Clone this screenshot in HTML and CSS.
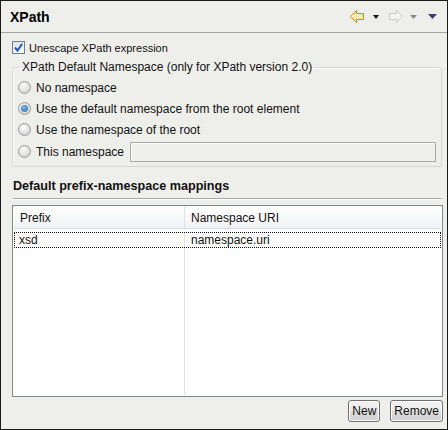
FILE: index.html
```html
<!DOCTYPE html>
<html>
<head>
<meta charset="utf-8">
<link rel="stylesheet" href="styles.css">
</head>
<body>
<div class="view">
  <div class="titlebar">
    <span class="title">XPath</span>
    <div class="tools">
      <svg class="arrow" width="14" height="13" viewBox="0 0 14 13"><path d="M0.5 6.5 L6.5 0.5 L6.5 3.5 L13.5 3.5 L13.5 9.5 L6.5 9.5 L6.5 12.5 Z" fill="#fde9a8" stroke="#d68a10" stroke-width="1"/></svg>
      <svg class="drop d1" width="6" height="4" viewBox="0 0 6 4"><path d="M0 0 H6 L3 4 Z" fill="#111"/></svg>
      <svg class="arrow a2" width="14" height="13" viewBox="0 0 14 13"><path d="M13.5 6.5 L7.5 0.5 L7.5 3.5 L0.5 3.5 L0.5 9.5 L7.5 9.5 L7.5 12.5 Z" fill="#f4f4f2" stroke="#c8c8c6" stroke-width="1"/></svg>
      <svg class="drop d2" width="7" height="4" viewBox="0 0 7 4"><path d="M0 0 H7 L3.5 4 Z" fill="#8a8a8a"/></svg>
      <svg class="drop d3" width="9" height="5" viewBox="0 0 9 5"><path d="M0 0 H9 L4.5 5 Z" fill="#3c3a78"/></svg>
    </div>
  </div>
  <div class="content">
    <label class="check-row">
      <span class="checkbox"><svg width="9" height="9" viewBox="0 0 9 9"><path d="M1 4.5 L3.5 7.5 L8 1" fill="none" stroke="#2250b8" stroke-width="2"/></svg></span>
      <span>Unescape XPath expression</span>
    </label>
    <fieldset class="group">
      <legend>XPath Default Namespace (only for XPath version 2.0)</legend>
      <div class="radio-row"><span class="radio"></span><span>No namespace</span></div>
      <div class="radio-row"><span class="radio on"></span><span>Use the default namespace from the root element</span></div>
      <div class="radio-row"><span class="radio"></span><span>Use the namespace of the root</span></div>
      <div class="radio-row field-row"><span class="radio"></span><span class="lbl">This namespace</span><span class="field"></span></div>
    </fieldset>
    <div class="section-title">Default prefix-namespace mappings</div>
    <div class="rule"></div>
    <div class="table">
      <div class="thead">
        <div class="c1">Prefix</div>
        <div class="c2">Namespace URI</div>
      </div>
      <div class="trow focus">
        <div class="c1">xsd</div>
        <div class="c2">namespace.uri</div>
      </div>
      <div class="tbody-rest">
        <div class="c1"></div>
        <div class="c2"></div>
      </div>
    </div>
    <div class="buttons">
      <button class="btn">New</button>
      <button class="btn">Remove</button>
    </div>
  </div>
</div>
</body>
</html>
```
FILE: styles.css
```css
* { box-sizing: border-box; }
html, body { margin: 0; padding: 0; }
body {
  font-family: "Liberation Sans", Arial, sans-serif;
  font-size: 12px;
  color: #111;
  background: #efefec;
}
.view {
  width: 448px;
  height: 430px;
  border: 1px solid #1a1a1a;
  background: #eeeeeb;
  display: flex;
  flex-direction: column;
  overflow: hidden;
}
.titlebar {
  height: 32px;
  flex: none;
  border-bottom: 1px solid #a4a4a2;
  display: flex;
  align-items: center;
  justify-content: space-between;
  padding: 0 10px 0 9px;
}
.title {
  font-weight: bold;
  font-size: 14px;
  color: #000;
}
.tools {
  display: flex;
  align-items: center;
}
.tools svg { display: block; }
.tools .d1 { margin-left: 9px; }
.tools .a2 { margin-left: 10px; }
.tools .d2 { margin-left: 7px; }
.tools .d3 { margin-left: 11px; }
.content {
  flex: 1;
  display: flex;
  flex-direction: column;
  padding: 7px 3px 0 10px;
}
.content > * { flex-shrink: 0; }
.check-row {
  display: flex;
  align-items: center;
  height: 15px;
  gap: 4px;
  padding-left: 1px;
  font-size: 11px;
}
.checkbox {
  width: 13px;
  height: 13px;
  border: 1px solid #6f7f96;
  background: linear-gradient(#dfe3ea, #f8f9fb);
  display: flex;
  align-items: center;
  justify-content: center;
}
.checkbox svg { display: block; }
.group {
  margin: 5px 2px 0 1px;
  padding: 3px 4px 3px 5px;
  border: 1px solid #d4d6d6;
  border-radius: 3px;
  box-shadow: inset 1px 1px 0 #fafafa;
}
.group legend {
  padding: 0 2px;
  margin-left: 2px;
  color: #111;
}
.radio-row {
  display: flex;
  align-items: center;
  height: 21px;
  gap: 5px;
}
.radio {
  width: 13px;
  height: 13px;
  border-radius: 50%;
  border: 1px solid #9a9c9c;
  background: radial-gradient(circle at 40% 35%, #ffffff, #d6d6d4 70%, #c4c4c2);
  position: relative;
  flex: none;
}
.radio.on::after {
  content: "";
  position: absolute;
  left: 3px;
  top: 3px;
  width: 5px;
  height: 5px;
  border-radius: 50%;
  background: radial-gradient(circle at 40% 35%, #7cc4f4, #1560b8);
  box-shadow: 0 0 0 1px #4b7fb8;
}
.field-row { height: 23px; }
.field-row .lbl { width: 89px; }
.field {
  flex: 1;
  height: 20px;
  border: 1px solid #a9a9a7;
  background: #efefec;
  box-shadow: inset 1px 1px 0 #fbfbfb;
  margin-right: 1px;
}
.section-title {
  margin-top: 11px;
  font-weight: bold;
  font-size: 12.6px;
  height: 16px;
  line-height: 16px;
  padding-left: 2px;
  color: #111;
}
.rule {
  margin-top: 4px;
  margin-left: 2px;
  margin-right: 2px;
  height: 2px;
  border-top: 1px solid #a8a8a6;
  border-bottom: 1px solid #fbfbfb;
}
.table {
  margin-top: 5px;
  margin-left: 1px;
  margin-right: 1px;
  height: 192px;
  border: 1px solid #828790;
  background: #fefefe;
  display: flex;
  flex-direction: column;
  padding: 0 1px 1px;
}
.thead, .trow, .tbody-rest {
  display: flex;
  flex-shrink: 0;
}
.thead {
  height: 23px;
  background: linear-gradient(#ffffff, #f7f8f9 60%, #f1f2f4);
  border-bottom: 1px solid #d8dce0;
  align-items: center;
}
.thead .c1, .thead .c2 { padding-top: 2px; }
.c1 { width: 171px; padding-left: 6px; border-right: 1px solid #e2e2e2; height: 100%; display: flex; align-items: center; }
.c2 { flex: 1; padding-left: 6px; height: 100%; display: flex; align-items: center; }
.trow {
  height: 16px;
  margin-top: 3px;
  outline: 1px dotted #111;
  outline-offset: -1px;
}
.trow .c1 { padding-left: 5px; }
.tbody-rest { flex: 1 1 auto; }
.buttons {
  display: flex;
  justify-content: flex-end;
  gap: 10px;
  margin-top: 3px;
  margin-right: 1px;
}
.btn {
  font-family: "Liberation Sans", Arial, sans-serif;
  font-size: 12px;
  color: #111;
  height: 22px;
  padding: 0 3px;
  border: 1px solid #707070;
  border-radius: 3px;
  background: linear-gradient(#f2f2f2, #ebebeb 50%, #dddddd 51%, #cfcfcf);
  box-shadow: inset 0 0 0 1px #fcfcfc;
}
```
